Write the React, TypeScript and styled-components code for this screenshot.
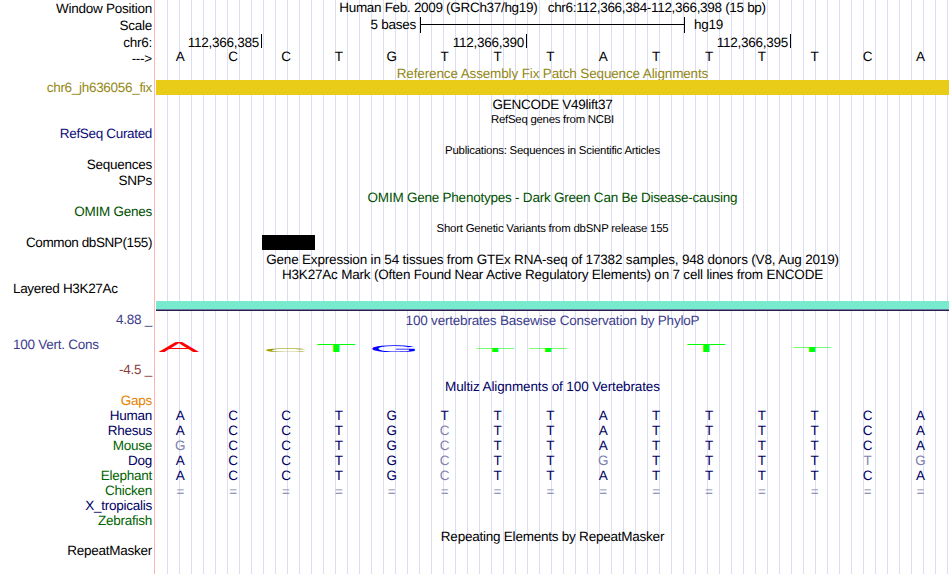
import React from "react";
import styled, { createGlobalStyle } from "styled-components";

const GlobalStyle = createGlobalStyle`
  body {
    margin: 0;
    background: #ffffff;
    overflow: hidden;
  }
`;

const Browser = styled.div`
  display: flex;
  width: 950px;
  height: 574px;
  font-family: "Liberation Sans", Arial, Helvetica, sans-serif;
  font-size: 13.5px;
  line-height: 15px;
  letter-spacing: -0.25px;
  color: #000000;
  text-rendering: geometricPrecision;
`;

const LabelColumn = styled.div`
  display: flex;
  flex-direction: column;
  width: 154px;
  box-sizing: border-box;
  padding-right: 2px;
`;

interface LineProps {
  $gap?: number;
  $color?: string;
  $spacing?: number;
}

const Label = styled.div<LineProps & { $indent?: boolean }>`
  height: 15px;
  margin-top: ${(p) => p.$gap || 0}px;
  padding-left: ${(p) => (p.$indent ? 13 : 0)}px;
  text-align: ${(p) => (p.$indent ? "left" : "right")};
  color: ${(p) => p.$color || "inherit"};
  letter-spacing: ${(p) => p.$spacing ?? -0.25}px;
  white-space: pre;
`;

const DataColumn = styled.div`
  display: flex;
  flex-direction: column;
  width: 793px;
  margin-left: 1px;
  background: repeating-linear-gradient(
    to right,
    transparent 0 11px,
    #dcdcf5 11px 12px
  );
`;

const Divider = styled.div`
  width: 1px;
  background: #ffb4b4;
`;

const Title = styled.div<LineProps & { $small?: boolean }>`
  height: 15px;
  margin-top: ${(p) => p.$gap || 0}px;
  font-size: ${(p) => (p.$small ? 11.4 : 13.5)}px;
  line-height: ${(p) => (p.$small ? 17 : 15)}px;
  color: ${(p) => p.$color || "inherit"};
  letter-spacing: ${(p) => p.$spacing ?? -0.23}px;
  text-align: center;
  white-space: pre;
`;

const ScaleRow = styled.div`
  display: flex;
  height: 16px;
  margin-top: 2px;
`;

const ScaleText = styled.div<{ $width: number }>`
  width: ${(p) => p.$width}px;
  text-align: right;
`;

const ScaleBar = styled.div`
  width: 263px;
  margin: 0 9px 0 4px;
  border: solid #000000;
  border-width: 0 1px;
  background: linear-gradient(#000000, #000000) 0 7px / 100% 1px no-repeat;
`;

const TickRow = styled.div`
  display: flex;
  height: 15px;
  margin-top: 1px;
  line-height: 17px;
`;

const Tick = styled.div<{ $width: number }>`
  width: ${(p) => p.$width}px;
  height: 14px;
  box-sizing: border-box;
  padding-right: 2px;
  border-right: 1px solid #000000;
  text-align: right;
`;

const BaseRow = styled.div<{ $gap?: number; $color?: string }>`
  display: grid;
  grid-template-columns: repeat(15, 1fr);
  height: 15px;
  margin-top: ${(p) => p.$gap || 0}px;
  color: ${(p) => p.$color || "inherit"};
  letter-spacing: 0;
`;

const Base = styled.span<{ $faded?: boolean }>`
  padding-right: 4.2px;
  text-align: center;
  color: ${(p) => (p.$faded ? "#8080ae" : "inherit")};
`;

const Bar = styled.div<{ $color: string; $gap?: number; $start?: number; $width?: number }>`
  height: 15px;
  width: ${(p) => (p.$width ? p.$width + "px" : "100%")};
  margin-top: ${(p) => p.$gap || 0}px;
  margin-left: ${(p) => p.$start || 0}px;
  background: ${(p) => p.$color};
`;

const SignalBand = styled.div`
  height: 8px;
  margin-top: 19px;
  background: #78eacd;
  border-bottom: 1px solid #6a78a4;
  box-shadow: 0 1px 0 #2a2050;
`;

const Logo = styled.svg`
  display: block;
  width: 793px;
  height: 10px;
  margin-top: 14px;
  overflow: visible;
  letter-spacing: 0;
`;

const GOLD = "#948714";
const NAVY = "#000064";
const GREEN = "#006400";
const PHYLOP = "#3c3c8c";

const labels = [
  { text: "Window Position", gap: 1 },
  { text: "Scale", gap: 2 },
  { text: "chr6:", gap: 2 },
  { text: "--->", gap: 1 },
  { text: "chr6_jh636056_fix", gap: 14, color: GOLD, spacing: -0.3 },
  { text: "RefSeq Curated", gap: 31, color: "#0c0c78", spacing: -0.33 },
  { text: "Sequences", gap: 16 },
  { text: "SNPs", gap: 1 },
  { text: "OMIM Genes", gap: 16, color: "#005000" },
  { text: "Common dbSNP(155)", gap: 16, spacing: -0.4 },
  { text: "Layered H3K27Ac", gap: 31, indent: true, spacing: -0.33 },
  { text: "4.88 _", gap: 16, color: PHYLOP },
  { text: "100 Vert. Cons", gap: 10, color: PHYLOP, indent: true },
  { text: "-4.5 _", gap: 10, color: "#8c3c3c" },
  { text: "Gaps", gap: 16, color: "#e68200" },
  { text: "Human", color: NAVY },
  { text: "Rhesus", color: NAVY },
  { text: "Mouse", color: GREEN },
  { text: "Dog", color: NAVY },
  { text: "Elephant", color: GREEN },
  { text: "Chicken", color: GREEN },
  { text: "X_tropicalis", color: NAVY },
  { text: "Zebrafish", color: GREEN },
  { text: "RepeatMasker", gap: 15 },
];

const reference = "ACCTGTTTATTTTCA";

const alignments = [
  "ACCTGTTTATTTTCA",
  "ACCTGCTTATTTTCA",
  "GCCTGCTTATTTTCA",
  "ACCTGCTTGTTTTTG",
  "ACCTGCTTATTTTCA",
];

// x is the left edge of the glyph, size its horizontal em, height in pixels
const logo = [
  { base: "A", x: 3.8, size: 61, height: 10, color: "#ff0000" },
  { base: "C", x: 108.3, size: 62, height: 3.6, color: "#a0a000" },
  { base: "T", x: 161.1, size: 67, height: 8, color: "#00ff00" },
  { base: "G", x: 214.3, size: 65, height: 6.6, color: "#0000ff" },
  { base: "T", x: 320.1, size: 67, height: 4, color: "#00ff00" },
  { base: "T", x: 373.1, size: 67, height: 4, color: "#00ff00" },
  { base: "T", x: 531.1, size: 67, height: 8, color: "#00ff00" },
  { base: "T", x: 637.1, size: 67, height: 5, color: "#00ff00" },
];

function Bases({ sequence, gap, color }: { sequence: string; gap?: number; color?: string }) {
  return (
    <BaseRow $gap={gap} $color={color}>
      {sequence.split("").map((base, i) => (
        <Base key={i} $faded={base !== reference[i]}>
          {base}
        </Base>
      ))}
    </BaseRow>
  );
}

export default function App() {
  return (
    <Browser>
      <GlobalStyle />
      <LabelColumn>
        {labels.map((l) => (
          <Label key={l.text} $gap={l.gap} $color={l.color} $indent={l.indent} $spacing={l.spacing}>
            {l.text}
          </Label>
        ))}
      </LabelColumn>
      <Divider />
      <DataColumn>
        <Title $spacing={-0.31}>{"Human Feb. 2009 (GRCh37/hg19)   chr6:112,366,384-112,366,398 (15 bp)"}</Title>
        <ScaleRow>
          <ScaleText $width={260}>5 bases</ScaleText>
          <ScaleBar />
          <span>hg19</span>
        </ScaleRow>
        <TickRow>
          <Tick $width={106}>112,366,385</Tick>
          <Tick $width={265}>112,366,390</Tick>
          <Tick $width={264}>112,366,395</Tick>
        </TickRow>
        <Bases sequence={reference} />
        <Title $gap={2} $color={GOLD} $spacing={-0.14}>
          Reference Assembly Fix Patch Sequence Alignments
        </Title>
        <Bar $color="#e8cc18" $gap={-1} />
        <Title $gap={2} $spacing={-0.27}>GENCODE V49lift37</Title>
        <Title $small $spacing={-0.25}>RefSeq genes from NCBI</Title>
        <Title $small $gap={16}>Publications: Sequences in Scientific Articles</Title>
        <Title $gap={32} $color="#005000">OMIM Gene Phenotypes - Dark Green Can Be Disease-causing</Title>
        <Title $small $gap={16} $spacing={-0.21}>Short Genetic Variants from dbSNP release 155</Title>
        <Bar $color="#000000" $gap={-1} $start={106} $width={53} />
        <Title $gap={2} $spacing={-0.18}>
          Gene Expression in 54 tissues from GTEx RNA-seq of 17382 samples, 948 donors (V8, Aug 2019)
        </Title>
        <Title $spacing={-0.2}>
          H3K27Ac Mark (Often Found Near Active Regulatory Elements) on 7 cell lines from ENCODE
        </Title>
        <SignalBand />
        <Title $gap={3} $color={PHYLOP} $spacing={-0.2}>100 vertebrates Basewise Conservation by PhyloP</Title>
        <Logo viewBox="0 0 793 10">
          {logo.map((g) => (
            <text
              key={g.x}
              fontSize="10"
              fill={g.color}
              transform={`translate(${g.x - g.size * 0.02} 10) scale(${g.size / 10} ${g.height / 6.88})`}
            >
              {g.base}
            </text>
          ))}
        </Logo>
        <Title $gap={27} $color={NAVY} $spacing={-0.12}>Multiz Alignments of 100 Vertebrates</Title>
        {alignments.map((sequence, i) => (
          <Bases key={i} sequence={sequence} gap={i === 0 ? 14 : 0} color={NAVY} />
        ))}
        <Bases sequence="===============" gap={1} />
        <Title $gap={30}>Repeating Elements by RepeatMasker</Title>
      </DataColumn>
    </Browser>
  );
}
